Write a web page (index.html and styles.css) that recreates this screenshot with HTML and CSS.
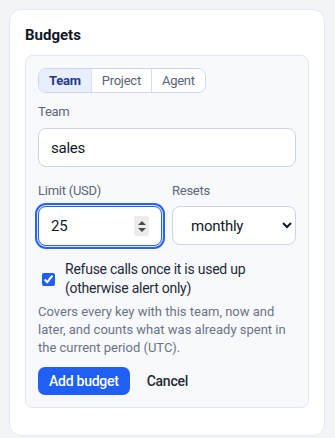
FILE: index.html
```html
<!DOCTYPE html>
<html lang="en">
<head>
<meta charset="utf-8">
<title>Budgets</title>
<link rel="stylesheet" href="styles.css">
</head>
<body>
<div class="card">
  <h2 class="title">Budgets</h2>
  <div class="panel">
    <div class="segment">
      <button class="seg active">Team</button>
      <button class="seg">Project</button>
      <button class="seg">Agent</button>
    </div>
    <label class="field">
      <span class="label">Team</span>
      <input class="input" type="text" value="sales">
    </label>
    <div class="row">
      <label class="field">
        <span class="label">Limit (USD)</span>
        <span class="num-wrap">
          <input class="input num" type="number" value="25">
          <span class="stepper"><i class="up"></i><i class="down"></i></span>
        </span>
      </label>
      <label class="field">
        <span class="label">Resets</span>
        <select class="input select">
          <option>monthly</option>
          <option>weekly</option>
          <option>daily</option>
        </select>
      </label>
    </div>
    <label class="check">
      <input type="checkbox" checked>
      <span>Refuse calls once it is used up<br>(otherwise alert only)</span>
    </label>
    <p class="help">Covers every key with this team, now and later, and counts what was already spent in the current period (UTC).</p>
    <div class="actions">
      <button class="btn primary">Add budget</button>
      <button class="btn ghost">Cancel</button>
    </div>
  </div>
</div>
</body>
</html>
```
FILE: styles.css
```css
* { box-sizing: border-box; }
html, body { margin: 0; }
body {
  background: #f3f4f8;
  padding: 9px 10px 0 9px;
  font-family: Roboto, "Noto Sans", sans-serif;
  letter-spacing: -0.25px;
  color: #1f2937;
}
.card {
  background: #fff;
  border: 1px solid #e6e8ef;
  border-radius: 12px;
  padding: 15px 15px 27px;
}
.title {
  margin: 0 0 10px;
  font-size: 15px;
  line-height: 20px;
  font-weight: 700;
  color: #111827;
  letter-spacing: 0;
}
.panel {
  background: #f8f9fc;
  border: 1px solid #e2e6ee;
  border-radius: 8px;
  padding: 12px;
  display: flex;
  flex-direction: column;
}
.segment {
  display: inline-flex;
  align-self: flex-start;
  border: 1px solid #cfd6e3;
  border-radius: 8px;
  overflow: hidden;
  height: 25px;
  background: #fff;
}
.seg {
  font-family: inherit;
  letter-spacing: inherit;
  font-size: 13px;
  border: 0;
  border-left: 1px solid #d8dde7;
  background: #fff;
  color: #5b6478;
  padding: 0 10px;
  height: 23px;
  line-height: 23px;
}
.seg:first-child { border-left: 0; }
.seg.active {
  background: #e8eefc;
  color: #1e3a8a;
  font-weight: 700;
}
.field {
  display: flex;
  flex-direction: column;
  min-width: 0;
}
.panel > .field { margin-top: 11px; }
.label {
  font-size: 13px;
  line-height: 16px;
  color: #5d6678;
  margin-bottom: 8px;
}
.input {
  font-family: inherit;
  letter-spacing: inherit;
  font-size: 15px;
  color: #111827;
  height: 39px;
  border: 1px solid #cdd5e1;
  border-radius: 8px;
  background: #fff;
  padding: 0 12px;
  width: 100%;
}
.row {
  display: grid;
  grid-template-columns: 1fr 1fr;
  gap: 10px;
  margin-top: 16px;
}
.row .label { margin-bottom: 7px; }
.num-wrap {
  position: relative;
  display: block;
}
.num {
  height: 40px;
  outline: none;
  border: 1px solid #2563eb;
  box-shadow: 0 0 0 1px #dbe6ff, 0 0 0 3px #2b63f0;
  -moz-appearance: textfield;
}
.num::-webkit-inner-spin-button,
.num::-webkit-outer-spin-button {
  -webkit-appearance: none;
  margin: 0;
}
.stepper {
  position: absolute;
  right: 13px;
  top: 10px;
  width: 15px;
  height: 20px;
  background: #ececee;
  border-radius: 2px;
  display: flex;
  flex-direction: column;
  align-items: center;
  justify-content: center;
  gap: 3px;
}
.stepper i {
  width: 0;
  height: 0;
  border-left: 4px solid transparent;
  border-right: 4px solid transparent;
}
.stepper .up { border-bottom: 4px solid #4a4a4f; }
.stepper .down { border-top: 4px solid #4a4a4f; }
.select {
  padding: 0 8px 0 14px;
  height: 39px;
}
.check {
  display: flex;
  align-items: center;
  margin-top: 14px;
  font-size: 14px;
  line-height: 19px;
  color: #1f2937;
}
.check input {
  width: 13px;
  height: 13px;
  margin: 0 10px 0 4px;
  accent-color: #1f5ff5;
  flex: none;
}
.help {
  margin: 5px 0 0;
  font-size: 13px;
  line-height: 18px;
  color: #6b7385;
  letter-spacing: 0;
}
.actions {
  display: flex;
  align-items: center;
  gap: 6px;
  margin-top: 10px;
}
.btn {
  font-family: inherit;
  letter-spacing: inherit;
  font-size: 14px;
  height: 28px;
  border-radius: 7px;
  border: 0;
  padding: 0 11px;
  font-weight: 500;
}
.primary {
  background: #1f5ff5;
  color: #fff;
}
.ghost {
  background: transparent;
  color: #1f2937;
}
```
